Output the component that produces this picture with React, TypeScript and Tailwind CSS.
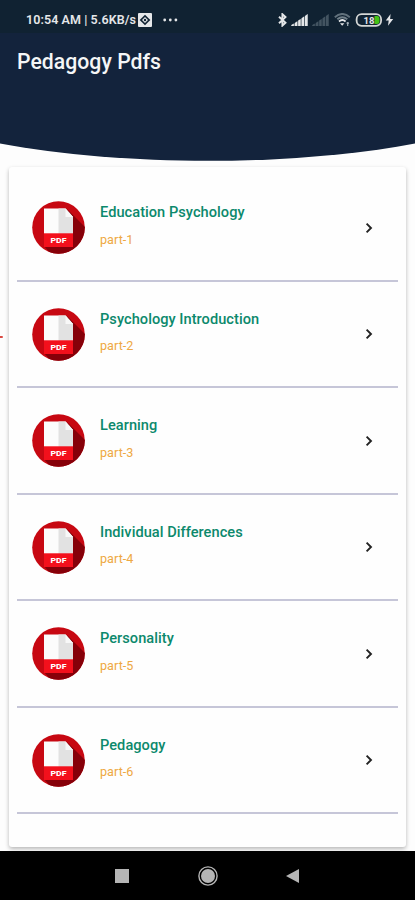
import React from 'react';

const PDFS = [
  { title: 'Education Psychology', part: 'part-1' },
  { title: 'Psychology Introduction', part: 'part-2' },
  { title: 'Learning', part: 'part-3' },
  { title: 'Individual Differences', part: 'part-4' },
  { title: 'Personality', part: 'part-5' },
  { title: 'Pedagogy', part: 'part-6' },
];

function PdfIcon() {
  return (
    <svg width="53" height="53" viewBox="0 0 53 53" className="shrink-0">
      <defs>
        <clipPath id="disc">
          <circle cx="26.5" cy="26.5" r="26.3" />
        </clipPath>
      </defs>
      <g clipPath="url(#disc)">
        <rect width="53" height="53" fill="#c70812" />
        <path d="M35 8L60 33V60H25L12 45L41 32Z" fill="#860009" />
        <path d="M12 7.5H33.5L41 16V33H12Z" fill="#fcfcfc" />
        <path d="M26.5 7.5H33.5L41 16V33H26.5Z" fill="#e2e2e2" />
        <path d="M33.5 7.5V16H41Z" fill="#f8f8f8" />
        <rect x="12" y="32.3" width="29" height="13.7" fill="#f3101c" />
      </g>
      <text
        x="26.5"
        y="41.7"
        textAnchor="middle"
        textLength="16"
        lengthAdjust="spacingAndGlyphs"
        fontSize="8"
        fontWeight="800"
        fill="#fff"
      >
        PDF
      </text>
    </svg>
  );
}

function SignalIcon({ className }: { className: string }) {
  return (
    <svg width="17" height="12" viewBox="0 0 17 12" fill="currentColor" className={className}>
      <path d="M0 12L17 0V12Z" opacity="0.35" />
      <path d="M0.3 12V11L2.8 9.5V12ZM3.8 12V9L6.2 7.3V12ZM7.2 12V6.6L9.6 4.9V12ZM10.6 12V4.2L13 2.5V12ZM14 12V1.9L16.6 0V12Z" />
    </svg>
  );
}

function StatusBar() {
  return (
    <div className="flex h-[33px] items-start bg-[#102232] pt-[13px] text-[#e5e7e9]">
      <div className="flex h-[14px] items-center pl-[26px]">
        <span className="w-[110px] whitespace-nowrap text-[12.5px] font-semibold leading-[14px] tracking-[0.08px]">
          10:54 AM | 5.6KB/s
        </span>
        <svg width="14" height="14" viewBox="0 0 14 14" className="ml-[2px]">
          <rect width="14" height="14" rx="1" fill="#e5e7e9" />
          <path d="M7 1.7L12.3 7L7 12.3L1.7 7Z" fill="#102232" />
          <path d="M7 4L10 7L7 10L4 7Z" fill="#e5e7e9" />
          <circle cx="7" cy="7" r="1.2" fill="#102232" />
        </svg>
        <svg width="15" height="4" viewBox="0 0 15 4" fill="currentColor" className="ml-[11px]">
          <circle cx="1.7" cy="2" r="1.4" />
          <circle cx="7.3" cy="2" r="1.4" />
          <circle cx="12.9" cy="2" r="1.4" />
        </svg>
      </div>
      <div className="ml-auto flex h-[14px] items-center pr-[21px]">
        <svg width="9" height="14" viewBox="0 0 9 14" fill="none" stroke="currentColor" strokeWidth="1.9">
          <path d="M1 3.7L7.5 9.8L4.4 12.6V1.2L7.5 4.1L1 10.2" />
        </svg>
        <SignalIcon className="ml-[4px]" />
        <SignalIcon className="ml-[4px] text-[#435461]" />
        <svg width="17" height="14" viewBox="0 0 17 14" fill="none" strokeWidth="1.9" className="ml-[5px]">
          <path d="M0.8 4.2Q8.3 -2.3 15.8 4.2" stroke="#61717c" />
          <path d="M3.3 6.3Q8.3 2.2 13.3 6.3" stroke="#71808a" />
          <path d="M5 8.4Q8.3 5.8 11.6 8.4" stroke="#e5e7e9" />
          <path d="M6 10.3L8.2 12.8L10.4 10.3Z" fill="#e5e7e9" />
          <path d="M13.7 9V13M12.5 10.2H15" stroke="#a5b1b8" strokeWidth="1.2" />
        </svg>
        <svg width="28" height="14" viewBox="0 0 28 14" className="ml-[4px]">
          <rect x="1.6" y="1.2" width="24.5" height="11.6" rx="5" fill="#102232" stroke="#d4d7d6" strokeWidth="1.8" />
          <path d="M19.5 3H22Q24.5 3 24.5 6V8Q24.5 11 22 11H19.5Z" fill="#43c315" />
          <text x="14" y="10.6" textAnchor="middle" fontSize="9.5" fontWeight="700" fill="#e5e7e9">18</text>
        </svg>
        <svg width="9" height="14" viewBox="0 0 9 14" className="ml-[2px]" fill="currentColor">
          <path d="M5.6 1L0.8 7.5H3.7L3 12.8L8.2 6H5.1Z" />
        </svg>
      </div>
    </div>
  );
}

function Header() {
  return (
    <header className="h-[167px] shrink-0">
      <StatusBar />
      <div className="h-[110px] bg-[#13233c] pl-[17px] pt-[15px]">
        <h1 className="whitespace-nowrap text-[21.2px] font-medium leading-[27px] tracking-[0.04px] text-[#f5f6f7]">Pedagogy Pdfs</h1>
      </div>
      <svg width="415" height="19" viewBox="0 0 415 19" className="block">
        <path d="M0 0H415V0.5C355 12 280 17.8 208 17.8S60 12 0 0.5Z" fill="#13233c" />
      </svg>
    </header>
  );
}

function PdfRow({ title, part }: { title: string; part: string }) {
  return (
    <li className="flex h-[106.5px] items-start border-b-2 border-[#c6c6d8] pl-[15px] pt-[26px]">
      <PdfIcon />
      <div className="ml-[15px] mt-[1.4px] whitespace-nowrap">
        <h2 className="text-[14.6px] font-medium leading-[20px] tracking-[0.04px] text-[#0c896c]">{title}</h2>
        <p className="mt-[8.6px] text-[12.6px] leading-[18px] tracking-[0.05px] text-[#eea843]">{part}</p>
      </div>
      <svg width="8" height="12" viewBox="0 0 8 12" fill="none" stroke="#222" strokeWidth="1.9" className="ml-auto mr-[25px] mt-[20.5px]">
        <path d="M1.6 1.6L6 6L1.6 10.4" />
      </svg>
    </li>
  );
}

function NavBar() {
  return (
    <nav className="flex h-[49px] shrink-0 items-center bg-black text-[#b5b5b5]">
      <svg width="14" height="14" className="ml-[115px]" fill="currentColor">
        <rect width="14" height="14" />
      </svg>
      <svg width="20" height="20" viewBox="0 0 20 20" className="ml-[69px]">
        <circle cx="10" cy="10" r="9.1" fill="none" stroke="currentColor" strokeWidth="1.4" />
        <circle cx="10" cy="10" r="7" fill="currentColor" />
      </svg>
      <svg width="13" height="14" viewBox="0 0 13 14" className="ml-[68px]" fill="currentColor">
        <path d="M0 7L13 0V14Z" />
      </svg>
    </nav>
  );
}

export default function App() {
  return (
    <div className="relative flex h-[900px] w-[415px] flex-col overflow-hidden bg-[#fdfdfd] font-['Roboto',sans-serif]">
      <Header />
      <main className="h-[684px] shrink-0 px-[9px] pb-[4px]">
        <ul className="h-[680px] rounded-[3px] bg-[#fefefe] px-[8px] pt-[8px] shadow-[0_2px_4px_0_rgba(0,0,0,0.28)]">
          {PDFS.map((pdf) => (
            <PdfRow key={pdf.part} {...pdf} />
          ))}
        </ul>
      </main>
      <NavBar />
      {/* tip of the marker at the screen edge */}
      <span className="absolute left-0 top-[336px] h-[2px] w-[3px] rounded-r-full bg-[#d94a43]" />
    </div>
  );
}
